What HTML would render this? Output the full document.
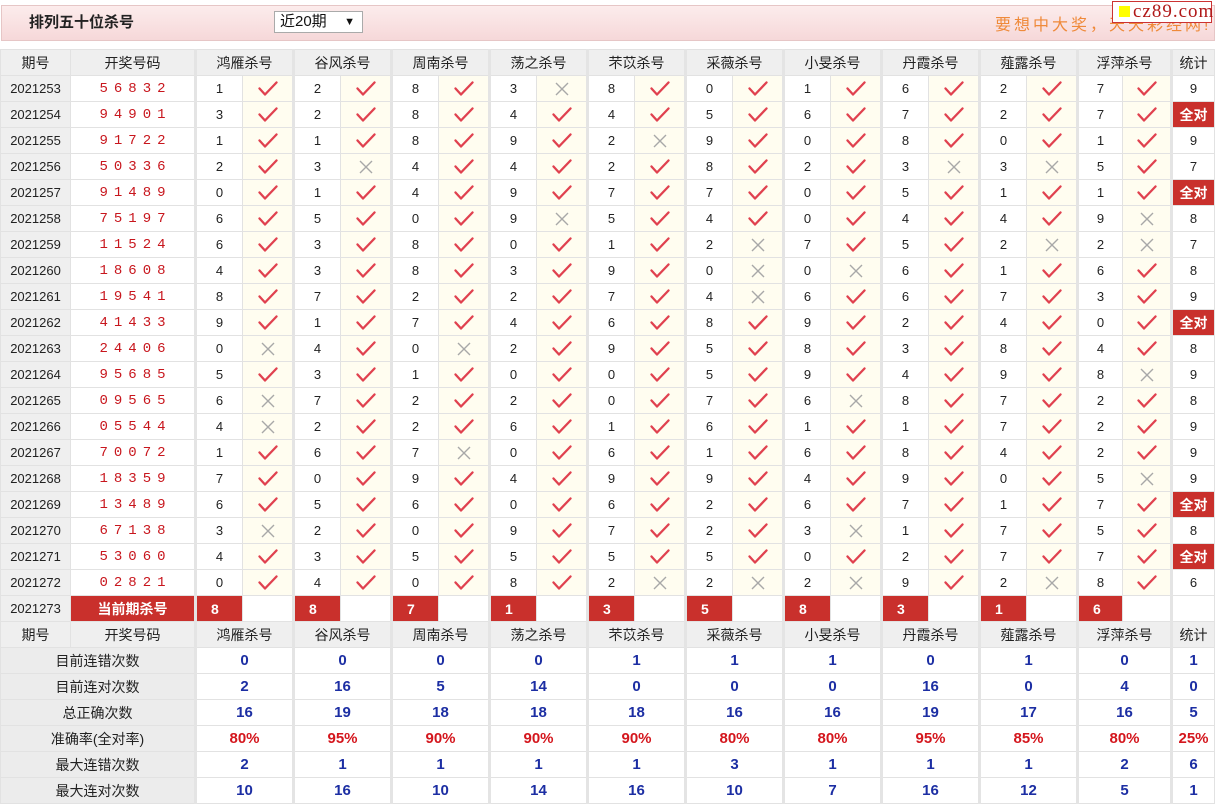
<!DOCTYPE html>
<html><head><meta charset="utf-8">
<style>
body{margin:0;width:1216px;height:808px;background:#fff;font-family:"Liberation Sans","Noto Sans CJK SC",sans-serif;position:relative;overflow:hidden}
.bar{position:absolute;left:1px;top:5px;width:1212px;height:34px;background:linear-gradient(#fcecec,#f6d8d9);border:1px solid #e6c6c6}
.title{position:absolute;left:27px;top:5px;font-size:15px;font-weight:bold;color:#222}
.sel{position:absolute;left:272px;top:5px;width:89px;height:22px;border:1px solid #aaa;background:#fff;font-size:15px;line-height:20px;box-sizing:border-box;padding-left:5px;color:#111}
.sel span{position:absolute;right:7px;top:0;font-size:11px}
.slogan{position:absolute;left:993px;top:5px;font-size:16px;color:#ef8a3a;letter-spacing:3px;white-space:nowrap}
.badge{position:absolute;left:1112px;top:1px;width:100px;height:22px;background:#fff;border:1px solid #c33;box-sizing:border-box;z-index:2}
.badge i{position:absolute;left:6px;top:4px;width:11px;height:11px;background:#ff0}
.badge b{position:absolute;left:20px;top:-1px;font-family:"Liberation Serif",serif;font-size:19px;font-weight:normal;color:#b01818;letter-spacing:1px}
table{position:absolute;left:0;top:49px;border-collapse:collapse;table-layout:fixed;width:1214px}
td{height:25px;border:1px solid #e2e2e2;text-align:center;font-size:13px;color:#222;padding:0;overflow:hidden;white-space:nowrap}
tr.h td{background:#efefef;font-size:14px;color:#222}
td.p{background:#efefef;font-size:13px}
td.d{color:#c8161d;letter-spacing:6px;font-family:"Liberation Mono",monospace;font-size:14px;padding-left:6px}
td.g{border-left:3px solid #e4e4e4}
td.c{background:#fffdf0}
td.a{background:#c9302c;color:#fff;font-weight:bold;font-size:14px}
td.k{background:#c9302c;color:#fff;font-weight:bold;font-size:14px;text-align:left;padding-left:14px}
td.l{background:#ececec;font-size:14px}
td.v{color:#1c2ea3;font-weight:bold;font-size:15px}
td.r{color:#d4161d;font-weight:bold;font-size:15px}
svg{display:block;margin:auto}
</style></head><body>
<svg width="0" height="0" style="position:absolute"><defs>
<symbol id="y" viewBox="0 0 20 16"><path d="M1.5 7.5L7 13.5L18.5 1.5" fill="none" stroke="#e0414f" stroke-width="2.3" stroke-linecap="round" stroke-linejoin="round"/></symbol>
<symbol id="x" viewBox="0 0 16 16"><path d="M2 2L14 14M14 2L2 14" fill="none" stroke="#a8a8a8" stroke-width="1.4"/></symbol>
</defs></svg>
<div class="bar"><div class="title">排列五十位杀号</div><div class="sel">近20期<span>▼</span></div><div class="slogan">要想中大奖，天天彩经网!</div></div>
<div class="badge"><i></i><b>cz89.com</b></div>
<table>
<colgroup><col style="width:70px"><col style="width:125px">
<col style="width:47px"><col style="width:51px"><col style="width:47px"><col style="width:51px"><col style="width:47px"><col style="width:51px"><col style="width:47px"><col style="width:51px"><col style="width:47px"><col style="width:51px"><col style="width:47px"><col style="width:51px"><col style="width:47px"><col style="width:51px"><col style="width:47px"><col style="width:51px"><col style="width:47px"><col style="width:51px"><col style="width:45px"><col style="width:49px"><col style="width:43px"></colgroup>
<tr class="h"><td>期号</td><td>开奖号码</td><td class="g" colspan="2">鸿雁杀号</td><td class="g" colspan="2">谷风杀号</td><td class="g" colspan="2">周南杀号</td><td class="g" colspan="2">荡之杀号</td><td class="g" colspan="2">芣苡杀号</td><td class="g" colspan="2">采薇杀号</td><td class="g" colspan="2">小旻杀号</td><td class="g" colspan="2">丹霞杀号</td><td class="g" colspan="2">薤露杀号</td><td class="g" colspan="2">浮萍杀号</td><td class="g">统计</td></tr>
<tr><td class="p">2021253</td><td class="d">56832</td><td class="g">1</td><td class="c"><svg width="20" height="16"><use href="#y"/></svg></td><td class="g">2</td><td class="c"><svg width="20" height="16"><use href="#y"/></svg></td><td class="g">8</td><td class="c"><svg width="20" height="16"><use href="#y"/></svg></td><td class="g">3</td><td class="c"><svg width="16" height="16"><use href="#x"/></svg></td><td class="g">8</td><td class="c"><svg width="20" height="16"><use href="#y"/></svg></td><td class="g">0</td><td class="c"><svg width="20" height="16"><use href="#y"/></svg></td><td class="g">1</td><td class="c"><svg width="20" height="16"><use href="#y"/></svg></td><td class="g">6</td><td class="c"><svg width="20" height="16"><use href="#y"/></svg></td><td class="g">2</td><td class="c"><svg width="20" height="16"><use href="#y"/></svg></td><td class="g">7</td><td class="c"><svg width="20" height="16"><use href="#y"/></svg></td><td class="g">9</td></tr>
<tr><td class="p">2021254</td><td class="d">94901</td><td class="g">3</td><td class="c"><svg width="20" height="16"><use href="#y"/></svg></td><td class="g">2</td><td class="c"><svg width="20" height="16"><use href="#y"/></svg></td><td class="g">8</td><td class="c"><svg width="20" height="16"><use href="#y"/></svg></td><td class="g">4</td><td class="c"><svg width="20" height="16"><use href="#y"/></svg></td><td class="g">4</td><td class="c"><svg width="20" height="16"><use href="#y"/></svg></td><td class="g">5</td><td class="c"><svg width="20" height="16"><use href="#y"/></svg></td><td class="g">6</td><td class="c"><svg width="20" height="16"><use href="#y"/></svg></td><td class="g">7</td><td class="c"><svg width="20" height="16"><use href="#y"/></svg></td><td class="g">2</td><td class="c"><svg width="20" height="16"><use href="#y"/></svg></td><td class="g">7</td><td class="c"><svg width="20" height="16"><use href="#y"/></svg></td><td class="g a">全对</td></tr>
<tr><td class="p">2021255</td><td class="d">91722</td><td class="g">1</td><td class="c"><svg width="20" height="16"><use href="#y"/></svg></td><td class="g">1</td><td class="c"><svg width="20" height="16"><use href="#y"/></svg></td><td class="g">8</td><td class="c"><svg width="20" height="16"><use href="#y"/></svg></td><td class="g">9</td><td class="c"><svg width="20" height="16"><use href="#y"/></svg></td><td class="g">2</td><td class="c"><svg width="16" height="16"><use href="#x"/></svg></td><td class="g">9</td><td class="c"><svg width="20" height="16"><use href="#y"/></svg></td><td class="g">0</td><td class="c"><svg width="20" height="16"><use href="#y"/></svg></td><td class="g">8</td><td class="c"><svg width="20" height="16"><use href="#y"/></svg></td><td class="g">0</td><td class="c"><svg width="20" height="16"><use href="#y"/></svg></td><td class="g">1</td><td class="c"><svg width="20" height="16"><use href="#y"/></svg></td><td class="g">9</td></tr>
<tr><td class="p">2021256</td><td class="d">50336</td><td class="g">2</td><td class="c"><svg width="20" height="16"><use href="#y"/></svg></td><td class="g">3</td><td class="c"><svg width="16" height="16"><use href="#x"/></svg></td><td class="g">4</td><td class="c"><svg width="20" height="16"><use href="#y"/></svg></td><td class="g">4</td><td class="c"><svg width="20" height="16"><use href="#y"/></svg></td><td class="g">2</td><td class="c"><svg width="20" height="16"><use href="#y"/></svg></td><td class="g">8</td><td class="c"><svg width="20" height="16"><use href="#y"/></svg></td><td class="g">2</td><td class="c"><svg width="20" height="16"><use href="#y"/></svg></td><td class="g">3</td><td class="c"><svg width="16" height="16"><use href="#x"/></svg></td><td class="g">3</td><td class="c"><svg width="16" height="16"><use href="#x"/></svg></td><td class="g">5</td><td class="c"><svg width="20" height="16"><use href="#y"/></svg></td><td class="g">7</td></tr>
<tr><td class="p">2021257</td><td class="d">91489</td><td class="g">0</td><td class="c"><svg width="20" height="16"><use href="#y"/></svg></td><td class="g">1</td><td class="c"><svg width="20" height="16"><use href="#y"/></svg></td><td class="g">4</td><td class="c"><svg width="20" height="16"><use href="#y"/></svg></td><td class="g">9</td><td class="c"><svg width="20" height="16"><use href="#y"/></svg></td><td class="g">7</td><td class="c"><svg width="20" height="16"><use href="#y"/></svg></td><td class="g">7</td><td class="c"><svg width="20" height="16"><use href="#y"/></svg></td><td class="g">0</td><td class="c"><svg width="20" height="16"><use href="#y"/></svg></td><td class="g">5</td><td class="c"><svg width="20" height="16"><use href="#y"/></svg></td><td class="g">1</td><td class="c"><svg width="20" height="16"><use href="#y"/></svg></td><td class="g">1</td><td class="c"><svg width="20" height="16"><use href="#y"/></svg></td><td class="g a">全对</td></tr>
<tr><td class="p">2021258</td><td class="d">75197</td><td class="g">6</td><td class="c"><svg width="20" height="16"><use href="#y"/></svg></td><td class="g">5</td><td class="c"><svg width="20" height="16"><use href="#y"/></svg></td><td class="g">0</td><td class="c"><svg width="20" height="16"><use href="#y"/></svg></td><td class="g">9</td><td class="c"><svg width="16" height="16"><use href="#x"/></svg></td><td class="g">5</td><td class="c"><svg width="20" height="16"><use href="#y"/></svg></td><td class="g">4</td><td class="c"><svg width="20" height="16"><use href="#y"/></svg></td><td class="g">0</td><td class="c"><svg width="20" height="16"><use href="#y"/></svg></td><td class="g">4</td><td class="c"><svg width="20" height="16"><use href="#y"/></svg></td><td class="g">4</td><td class="c"><svg width="20" height="16"><use href="#y"/></svg></td><td class="g">9</td><td class="c"><svg width="16" height="16"><use href="#x"/></svg></td><td class="g">8</td></tr>
<tr><td class="p">2021259</td><td class="d">11524</td><td class="g">6</td><td class="c"><svg width="20" height="16"><use href="#y"/></svg></td><td class="g">3</td><td class="c"><svg width="20" height="16"><use href="#y"/></svg></td><td class="g">8</td><td class="c"><svg width="20" height="16"><use href="#y"/></svg></td><td class="g">0</td><td class="c"><svg width="20" height="16"><use href="#y"/></svg></td><td class="g">1</td><td class="c"><svg width="20" height="16"><use href="#y"/></svg></td><td class="g">2</td><td class="c"><svg width="16" height="16"><use href="#x"/></svg></td><td class="g">7</td><td class="c"><svg width="20" height="16"><use href="#y"/></svg></td><td class="g">5</td><td class="c"><svg width="20" height="16"><use href="#y"/></svg></td><td class="g">2</td><td class="c"><svg width="16" height="16"><use href="#x"/></svg></td><td class="g">2</td><td class="c"><svg width="16" height="16"><use href="#x"/></svg></td><td class="g">7</td></tr>
<tr><td class="p">2021260</td><td class="d">18608</td><td class="g">4</td><td class="c"><svg width="20" height="16"><use href="#y"/></svg></td><td class="g">3</td><td class="c"><svg width="20" height="16"><use href="#y"/></svg></td><td class="g">8</td><td class="c"><svg width="20" height="16"><use href="#y"/></svg></td><td class="g">3</td><td class="c"><svg width="20" height="16"><use href="#y"/></svg></td><td class="g">9</td><td class="c"><svg width="20" height="16"><use href="#y"/></svg></td><td class="g">0</td><td class="c"><svg width="16" height="16"><use href="#x"/></svg></td><td class="g">0</td><td class="c"><svg width="16" height="16"><use href="#x"/></svg></td><td class="g">6</td><td class="c"><svg width="20" height="16"><use href="#y"/></svg></td><td class="g">1</td><td class="c"><svg width="20" height="16"><use href="#y"/></svg></td><td class="g">6</td><td class="c"><svg width="20" height="16"><use href="#y"/></svg></td><td class="g">8</td></tr>
<tr><td class="p">2021261</td><td class="d">19541</td><td class="g">8</td><td class="c"><svg width="20" height="16"><use href="#y"/></svg></td><td class="g">7</td><td class="c"><svg width="20" height="16"><use href="#y"/></svg></td><td class="g">2</td><td class="c"><svg width="20" height="16"><use href="#y"/></svg></td><td class="g">2</td><td class="c"><svg width="20" height="16"><use href="#y"/></svg></td><td class="g">7</td><td class="c"><svg width="20" height="16"><use href="#y"/></svg></td><td class="g">4</td><td class="c"><svg width="16" height="16"><use href="#x"/></svg></td><td class="g">6</td><td class="c"><svg width="20" height="16"><use href="#y"/></svg></td><td class="g">6</td><td class="c"><svg width="20" height="16"><use href="#y"/></svg></td><td class="g">7</td><td class="c"><svg width="20" height="16"><use href="#y"/></svg></td><td class="g">3</td><td class="c"><svg width="20" height="16"><use href="#y"/></svg></td><td class="g">9</td></tr>
<tr><td class="p">2021262</td><td class="d">41433</td><td class="g">9</td><td class="c"><svg width="20" height="16"><use href="#y"/></svg></td><td class="g">1</td><td class="c"><svg width="20" height="16"><use href="#y"/></svg></td><td class="g">7</td><td class="c"><svg width="20" height="16"><use href="#y"/></svg></td><td class="g">4</td><td class="c"><svg width="20" height="16"><use href="#y"/></svg></td><td class="g">6</td><td class="c"><svg width="20" height="16"><use href="#y"/></svg></td><td class="g">8</td><td class="c"><svg width="20" height="16"><use href="#y"/></svg></td><td class="g">9</td><td class="c"><svg width="20" height="16"><use href="#y"/></svg></td><td class="g">2</td><td class="c"><svg width="20" height="16"><use href="#y"/></svg></td><td class="g">4</td><td class="c"><svg width="20" height="16"><use href="#y"/></svg></td><td class="g">0</td><td class="c"><svg width="20" height="16"><use href="#y"/></svg></td><td class="g a">全对</td></tr>
<tr><td class="p">2021263</td><td class="d">24406</td><td class="g">0</td><td class="c"><svg width="16" height="16"><use href="#x"/></svg></td><td class="g">4</td><td class="c"><svg width="20" height="16"><use href="#y"/></svg></td><td class="g">0</td><td class="c"><svg width="16" height="16"><use href="#x"/></svg></td><td class="g">2</td><td class="c"><svg width="20" height="16"><use href="#y"/></svg></td><td class="g">9</td><td class="c"><svg width="20" height="16"><use href="#y"/></svg></td><td class="g">5</td><td class="c"><svg width="20" height="16"><use href="#y"/></svg></td><td class="g">8</td><td class="c"><svg width="20" height="16"><use href="#y"/></svg></td><td class="g">3</td><td class="c"><svg width="20" height="16"><use href="#y"/></svg></td><td class="g">8</td><td class="c"><svg width="20" height="16"><use href="#y"/></svg></td><td class="g">4</td><td class="c"><svg width="20" height="16"><use href="#y"/></svg></td><td class="g">8</td></tr>
<tr><td class="p">2021264</td><td class="d">95685</td><td class="g">5</td><td class="c"><svg width="20" height="16"><use href="#y"/></svg></td><td class="g">3</td><td class="c"><svg width="20" height="16"><use href="#y"/></svg></td><td class="g">1</td><td class="c"><svg width="20" height="16"><use href="#y"/></svg></td><td class="g">0</td><td class="c"><svg width="20" height="16"><use href="#y"/></svg></td><td class="g">0</td><td class="c"><svg width="20" height="16"><use href="#y"/></svg></td><td class="g">5</td><td class="c"><svg width="20" height="16"><use href="#y"/></svg></td><td class="g">9</td><td class="c"><svg width="20" height="16"><use href="#y"/></svg></td><td class="g">4</td><td class="c"><svg width="20" height="16"><use href="#y"/></svg></td><td class="g">9</td><td class="c"><svg width="20" height="16"><use href="#y"/></svg></td><td class="g">8</td><td class="c"><svg width="16" height="16"><use href="#x"/></svg></td><td class="g">9</td></tr>
<tr><td class="p">2021265</td><td class="d">09565</td><td class="g">6</td><td class="c"><svg width="16" height="16"><use href="#x"/></svg></td><td class="g">7</td><td class="c"><svg width="20" height="16"><use href="#y"/></svg></td><td class="g">2</td><td class="c"><svg width="20" height="16"><use href="#y"/></svg></td><td class="g">2</td><td class="c"><svg width="20" height="16"><use href="#y"/></svg></td><td class="g">0</td><td class="c"><svg width="20" height="16"><use href="#y"/></svg></td><td class="g">7</td><td class="c"><svg width="20" height="16"><use href="#y"/></svg></td><td class="g">6</td><td class="c"><svg width="16" height="16"><use href="#x"/></svg></td><td class="g">8</td><td class="c"><svg width="20" height="16"><use href="#y"/></svg></td><td class="g">7</td><td class="c"><svg width="20" height="16"><use href="#y"/></svg></td><td class="g">2</td><td class="c"><svg width="20" height="16"><use href="#y"/></svg></td><td class="g">8</td></tr>
<tr><td class="p">2021266</td><td class="d">05544</td><td class="g">4</td><td class="c"><svg width="16" height="16"><use href="#x"/></svg></td><td class="g">2</td><td class="c"><svg width="20" height="16"><use href="#y"/></svg></td><td class="g">2</td><td class="c"><svg width="20" height="16"><use href="#y"/></svg></td><td class="g">6</td><td class="c"><svg width="20" height="16"><use href="#y"/></svg></td><td class="g">1</td><td class="c"><svg width="20" height="16"><use href="#y"/></svg></td><td class="g">6</td><td class="c"><svg width="20" height="16"><use href="#y"/></svg></td><td class="g">1</td><td class="c"><svg width="20" height="16"><use href="#y"/></svg></td><td class="g">1</td><td class="c"><svg width="20" height="16"><use href="#y"/></svg></td><td class="g">7</td><td class="c"><svg width="20" height="16"><use href="#y"/></svg></td><td class="g">2</td><td class="c"><svg width="20" height="16"><use href="#y"/></svg></td><td class="g">9</td></tr>
<tr><td class="p">2021267</td><td class="d">70072</td><td class="g">1</td><td class="c"><svg width="20" height="16"><use href="#y"/></svg></td><td class="g">6</td><td class="c"><svg width="20" height="16"><use href="#y"/></svg></td><td class="g">7</td><td class="c"><svg width="16" height="16"><use href="#x"/></svg></td><td class="g">0</td><td class="c"><svg width="20" height="16"><use href="#y"/></svg></td><td class="g">6</td><td class="c"><svg width="20" height="16"><use href="#y"/></svg></td><td class="g">1</td><td class="c"><svg width="20" height="16"><use href="#y"/></svg></td><td class="g">6</td><td class="c"><svg width="20" height="16"><use href="#y"/></svg></td><td class="g">8</td><td class="c"><svg width="20" height="16"><use href="#y"/></svg></td><td class="g">4</td><td class="c"><svg width="20" height="16"><use href="#y"/></svg></td><td class="g">2</td><td class="c"><svg width="20" height="16"><use href="#y"/></svg></td><td class="g">9</td></tr>
<tr><td class="p">2021268</td><td class="d">18359</td><td class="g">7</td><td class="c"><svg width="20" height="16"><use href="#y"/></svg></td><td class="g">0</td><td class="c"><svg width="20" height="16"><use href="#y"/></svg></td><td class="g">9</td><td class="c"><svg width="20" height="16"><use href="#y"/></svg></td><td class="g">4</td><td class="c"><svg width="20" height="16"><use href="#y"/></svg></td><td class="g">9</td><td class="c"><svg width="20" height="16"><use href="#y"/></svg></td><td class="g">9</td><td class="c"><svg width="20" height="16"><use href="#y"/></svg></td><td class="g">4</td><td class="c"><svg width="20" height="16"><use href="#y"/></svg></td><td class="g">9</td><td class="c"><svg width="20" height="16"><use href="#y"/></svg></td><td class="g">0</td><td class="c"><svg width="20" height="16"><use href="#y"/></svg></td><td class="g">5</td><td class="c"><svg width="16" height="16"><use href="#x"/></svg></td><td class="g">9</td></tr>
<tr><td class="p">2021269</td><td class="d">13489</td><td class="g">6</td><td class="c"><svg width="20" height="16"><use href="#y"/></svg></td><td class="g">5</td><td class="c"><svg width="20" height="16"><use href="#y"/></svg></td><td class="g">6</td><td class="c"><svg width="20" height="16"><use href="#y"/></svg></td><td class="g">0</td><td class="c"><svg width="20" height="16"><use href="#y"/></svg></td><td class="g">6</td><td class="c"><svg width="20" height="16"><use href="#y"/></svg></td><td class="g">2</td><td class="c"><svg width="20" height="16"><use href="#y"/></svg></td><td class="g">6</td><td class="c"><svg width="20" height="16"><use href="#y"/></svg></td><td class="g">7</td><td class="c"><svg width="20" height="16"><use href="#y"/></svg></td><td class="g">1</td><td class="c"><svg width="20" height="16"><use href="#y"/></svg></td><td class="g">7</td><td class="c"><svg width="20" height="16"><use href="#y"/></svg></td><td class="g a">全对</td></tr>
<tr><td class="p">2021270</td><td class="d">67138</td><td class="g">3</td><td class="c"><svg width="16" height="16"><use href="#x"/></svg></td><td class="g">2</td><td class="c"><svg width="20" height="16"><use href="#y"/></svg></td><td class="g">0</td><td class="c"><svg width="20" height="16"><use href="#y"/></svg></td><td class="g">9</td><td class="c"><svg width="20" height="16"><use href="#y"/></svg></td><td class="g">7</td><td class="c"><svg width="20" height="16"><use href="#y"/></svg></td><td class="g">2</td><td class="c"><svg width="20" height="16"><use href="#y"/></svg></td><td class="g">3</td><td class="c"><svg width="16" height="16"><use href="#x"/></svg></td><td class="g">1</td><td class="c"><svg width="20" height="16"><use href="#y"/></svg></td><td class="g">7</td><td class="c"><svg width="20" height="16"><use href="#y"/></svg></td><td class="g">5</td><td class="c"><svg width="20" height="16"><use href="#y"/></svg></td><td class="g">8</td></tr>
<tr><td class="p">2021271</td><td class="d">53060</td><td class="g">4</td><td class="c"><svg width="20" height="16"><use href="#y"/></svg></td><td class="g">3</td><td class="c"><svg width="20" height="16"><use href="#y"/></svg></td><td class="g">5</td><td class="c"><svg width="20" height="16"><use href="#y"/></svg></td><td class="g">5</td><td class="c"><svg width="20" height="16"><use href="#y"/></svg></td><td class="g">5</td><td class="c"><svg width="20" height="16"><use href="#y"/></svg></td><td class="g">5</td><td class="c"><svg width="20" height="16"><use href="#y"/></svg></td><td class="g">0</td><td class="c"><svg width="20" height="16"><use href="#y"/></svg></td><td class="g">2</td><td class="c"><svg width="20" height="16"><use href="#y"/></svg></td><td class="g">7</td><td class="c"><svg width="20" height="16"><use href="#y"/></svg></td><td class="g">7</td><td class="c"><svg width="20" height="16"><use href="#y"/></svg></td><td class="g a">全对</td></tr>
<tr><td class="p">2021272</td><td class="d">02821</td><td class="g">0</td><td class="c"><svg width="20" height="16"><use href="#y"/></svg></td><td class="g">4</td><td class="c"><svg width="20" height="16"><use href="#y"/></svg></td><td class="g">0</td><td class="c"><svg width="20" height="16"><use href="#y"/></svg></td><td class="g">8</td><td class="c"><svg width="20" height="16"><use href="#y"/></svg></td><td class="g">2</td><td class="c"><svg width="16" height="16"><use href="#x"/></svg></td><td class="g">2</td><td class="c"><svg width="16" height="16"><use href="#x"/></svg></td><td class="g">2</td><td class="c"><svg width="16" height="16"><use href="#x"/></svg></td><td class="g">9</td><td class="c"><svg width="20" height="16"><use href="#y"/></svg></td><td class="g">2</td><td class="c"><svg width="16" height="16"><use href="#x"/></svg></td><td class="g">8</td><td class="c"><svg width="20" height="16"><use href="#y"/></svg></td><td class="g">6</td></tr>
<tr><td class="p">2021273</td><td class="a">当前期杀号</td><td class="g k">8</td><td></td><td class="g k">8</td><td></td><td class="g k">7</td><td></td><td class="g k">1</td><td></td><td class="g k">3</td><td></td><td class="g k">5</td><td></td><td class="g k">8</td><td></td><td class="g k">3</td><td></td><td class="g k">1</td><td></td><td class="g k">6</td><td></td><td class="g"></td></tr>
<tr class="h"><td>期号</td><td>开奖号码</td><td class="g" colspan="2">鸿雁杀号</td><td class="g" colspan="2">谷风杀号</td><td class="g" colspan="2">周南杀号</td><td class="g" colspan="2">荡之杀号</td><td class="g" colspan="2">芣苡杀号</td><td class="g" colspan="2">采薇杀号</td><td class="g" colspan="2">小旻杀号</td><td class="g" colspan="2">丹霞杀号</td><td class="g" colspan="2">薤露杀号</td><td class="g" colspan="2">浮萍杀号</td><td class="g">统计</td></tr>
<tr><td class="l" colspan="2">目前连错次数</td><td class="g v" colspan="2">0</td><td class="g v" colspan="2">0</td><td class="g v" colspan="2">0</td><td class="g v" colspan="2">0</td><td class="g v" colspan="2">1</td><td class="g v" colspan="2">1</td><td class="g v" colspan="2">1</td><td class="g v" colspan="2">0</td><td class="g v" colspan="2">1</td><td class="g v" colspan="2">0</td><td class="g v">1</td></tr>
<tr><td class="l" colspan="2">目前连对次数</td><td class="g v" colspan="2">2</td><td class="g v" colspan="2">16</td><td class="g v" colspan="2">5</td><td class="g v" colspan="2">14</td><td class="g v" colspan="2">0</td><td class="g v" colspan="2">0</td><td class="g v" colspan="2">0</td><td class="g v" colspan="2">16</td><td class="g v" colspan="2">0</td><td class="g v" colspan="2">4</td><td class="g v">0</td></tr>
<tr><td class="l" colspan="2">总正确次数</td><td class="g v" colspan="2">16</td><td class="g v" colspan="2">19</td><td class="g v" colspan="2">18</td><td class="g v" colspan="2">18</td><td class="g v" colspan="2">18</td><td class="g v" colspan="2">16</td><td class="g v" colspan="2">16</td><td class="g v" colspan="2">19</td><td class="g v" colspan="2">17</td><td class="g v" colspan="2">16</td><td class="g v">5</td></tr>
<tr><td class="l" colspan="2">准确率(全对率)</td><td class="g r" colspan="2">80%</td><td class="g r" colspan="2">95%</td><td class="g r" colspan="2">90%</td><td class="g r" colspan="2">90%</td><td class="g r" colspan="2">90%</td><td class="g r" colspan="2">80%</td><td class="g r" colspan="2">80%</td><td class="g r" colspan="2">95%</td><td class="g r" colspan="2">85%</td><td class="g r" colspan="2">80%</td><td class="g r">25%</td></tr>
<tr><td class="l" colspan="2">最大连错次数</td><td class="g v" colspan="2">2</td><td class="g v" colspan="2">1</td><td class="g v" colspan="2">1</td><td class="g v" colspan="2">1</td><td class="g v" colspan="2">1</td><td class="g v" colspan="2">3</td><td class="g v" colspan="2">1</td><td class="g v" colspan="2">1</td><td class="g v" colspan="2">1</td><td class="g v" colspan="2">2</td><td class="g v">6</td></tr>
<tr><td class="l" colspan="2">最大连对次数</td><td class="g v" colspan="2">10</td><td class="g v" colspan="2">16</td><td class="g v" colspan="2">10</td><td class="g v" colspan="2">14</td><td class="g v" colspan="2">16</td><td class="g v" colspan="2">10</td><td class="g v" colspan="2">7</td><td class="g v" colspan="2">16</td><td class="g v" colspan="2">12</td><td class="g v" colspan="2">5</td><td class="g v">1</td></tr>
</table>
</body></html>
